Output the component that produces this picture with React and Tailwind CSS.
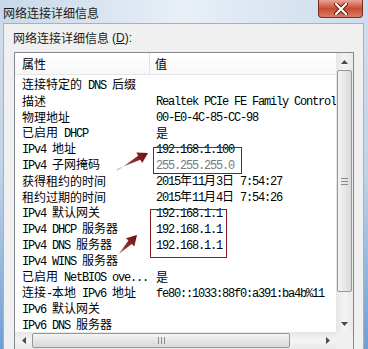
const CJK = "'Noto Sans CJK SC', 'Microsoft YaHei', sans-serif";
const MONO = "'Liberation Mono', 'Noto Sans CJK SC', monospace";

const rows = [
  ["连接特定的 DNS 后缀", ""],
  ["描述", "Realtek PCIe FE Family Controller"],
  ["物理地址", "00-E0-4C-85-CC-98"],
  ["已启用 DHCP", "是"],
  ["IPv4 地址", "192.168.1.100"],
  ["IPv4 子网掩码", "255.255.255.0", true],
  ["获得租约的时间", "2015年11月3日 7:54:27"],
  ["租约过期的时间", "2015年11月4日 7:54:26"],
  ["IPv4 默认网关", "192.168.1.1"],
  ["IPv4 DHCP 服务器", "192.168.1.1"],
  ["IPv4 DNS 服务器", "192.168.1.1"],
  ["IPv4 WINS 服务器", ""],
  ["已启用 NetBIOS ove...", "是"],
  ["连接-本地 IPv6 地址", "fe80::1033:88f0:a391:ba4b%11"],
  ["IPv6 默认网关", ""],
  ["IPv6 DNS 服务器", ""],
];

// split mixed text so CJK and latin runs get their own font
function Mixed({ text }) {
  const parts = text.split(/([\u3000-\u9fff\uff00-\uffef]+)/).filter(Boolean);
  return parts.map((p, i) =>
    /[\u3000-\u9fff\uff00-\uffef]/.test(p) ? (
      <span key={i} className="text-[12px] leading-[16px]" style={{ fontFamily: CJK }}>{p}</span>
    ) : (
      <span key={i} className="text-[12px] leading-[16px] tracking-[-1.2px] whitespace-pre" style={{ fontFamily: MONO }}>{p}</span>
    )
  );
}

function Tri({ dir }) {
  const pts = {
    up: "0,4 3.5,0 7,4",
    down: "0,0 3.5,4 7,0",
    left: "4,0 0,3.5 4,7",
    right: "0,0 4,3.5 0,7",
  }[dir];
  const w = dir === "up" || dir === "down" ? 7 : 4;
  const h = dir === "up" || dir === "down" ? 4 : 7;
  return (
    <svg width={w} height={h} viewBox={`0 0 ${w} ${h}`}>
      <polygon points={pts} fill="#4a4a4a" />
    </svg>
  );
}

export default function App() {
  return (
    <div className="relative w-[368px] h-[349px] overflow-hidden flex flex-col bg-gradient-to-b from-[#d3dfec] via-[#bfd2e7] to-[#6f9fd3]">
      {/* title bar */}
      <div className="h-[27px] flex items-start justify-between bg-gradient-to-r from-[#c9d8e9] via-[#e8eff7] to-[#cddcec]">
        <span className="pl-[3px] pt-[5px] text-[12px] text-[#1b1b1b] leading-[16px]" style={{ fontFamily: CJK }}>
          网络连接详细信息
        </span>
        <div className="mr-[5px] w-[45px] h-[18px] rounded-b-[4px] border border-t-0 border-[#7a2b22] bg-gradient-to-b from-[#e9a596] via-[#c84a33] to-[#dc7b63] flex items-center justify-center">
          <svg width="14" height="12" viewBox="0 0 14 12">
            <path d="M2 1 L12 11 M12 1 L2 11" stroke="#5a1a12" strokeWidth="4" strokeLinecap="round" />
            <path d="M2 1 L12 11 M12 1 L2 11" stroke="#ffffff" strokeWidth="2.2" strokeLinecap="round" />
          </svg>
        </div>
      </div>

      {/* dialog body */}
      <div className="ml-[3px] w-[361px] flex-1 bg-[#f0f0f0] border border-b-0 border-[#9fb2c8] flex flex-col">
        <div className="h-[28px] flex items-center pl-[9px] text-[#1b1b1b]">
          <span className="text-[12px]" style={{ fontFamily: CJK }}>网络连接详细信息</span>
          <span className="text-[12px] ml-[3px]" style={{ fontFamily: "'Liberation Sans', sans-serif" }}>
            (<span className="underline">D</span>):
          </span>
        </div>

        <div className="ml-[10px] w-[340px] flex-1 bg-white border border-b-0 border-[#828790] flex flex-col overflow-hidden">
          <div className="flex flex-1 overflow-hidden">
            {/* list content */}
            <div className="flex-1 overflow-hidden flex flex-col text-black">
              <div className="h-[22px] flex border-b border-[#e5e5e5] bg-gradient-to-b from-white to-[#f7f8fa]">
                <div className="w-[135px] pl-[7px] flex items-center border-r border-[#e3e3e3]">
                  <span className="text-[12px]" style={{ fontFamily: CJK }}>属性</span>
                </div>
                <div className="flex-1 pl-[5px] flex items-center">
                  <span className="text-[12px]" style={{ fontFamily: CJK }}>值</span>
                </div>
              </div>
              <div className="pt-[1px] flex flex-col">
                {rows.map(([k, v, gray], i) => (
                  <div key={i} className="h-[16px] flex items-center whitespace-nowrap">
                    <div className="w-[135px] shrink-0 pl-[7px] overflow-x-clip leading-[16px]">
                      <Mixed text={k} />
                    </div>
                    <div className={`flex-1 min-w-0 pl-[6px] overflow-x-clip leading-[16px] ${gray ? "text-[#7a7a7a]" : ""}`}>
                      <Mixed text={v} />
                    </div>
                  </div>
                ))}
              </div>
            </div>

            {/* vertical scrollbar */}
            <div className="w-[17px] flex flex-col bg-gradient-to-r from-[#e6e6e6] via-[#f4f4f4] to-[#e9e9e9]">
              <div className="h-[17px] flex items-center justify-center">
                <Tri dir="up" />
              </div>
              <div className="mx-[1px] h-[222px] rounded-[2px] border border-[#979797] bg-gradient-to-r from-[#f4f4f4] to-[#d9d9d9] flex items-center justify-center">
                <div className="flex flex-col gap-[2px]">
                  <div className="w-[7px] h-px bg-[#8a8a8a]" />
                  <div className="w-[7px] h-px bg-[#8a8a8a]" />
                  <div className="w-[7px] h-px bg-[#8a8a8a]" />
                </div>
              </div>
              <div className="flex-1" />
              <div className="h-[17px] flex items-center justify-center">
                <Tri dir="down" />
              </div>
            </div>
          </div>

          {/* horizontal scrollbar */}
          <div className="h-[17px] flex">
            <div className="flex-1 flex bg-gradient-to-b from-[#e6e6e6] via-[#f4f4f4] to-[#e9e9e9]">
              <div className="w-[17px] flex items-center justify-center">
                <Tri dir="left" />
              </div>
              <div className="my-[1px] w-[258px] rounded-[2px] border border-[#979797] bg-gradient-to-b from-[#f4f4f4] to-[#d9d9d9] flex items-center justify-center">
                <div className="flex gap-[2px]">
                  <div className="w-px h-[7px] bg-[#8a8a8a]" />
                  <div className="w-px h-[7px] bg-[#8a8a8a]" />
                  <div className="w-px h-[7px] bg-[#8a8a8a]" />
                </div>
              </div>
              <div className="flex-1" />
              <div className="w-[17px] flex items-center justify-center">
                <Tri dir="right" />
              </div>
            </div>
            <div className="w-[17px] bg-[#f0f0f0]" />
          </div>
        </div>
      </div>

      {/* annotations drawn over the screenshot */}
      <div className="absolute left-[153px] top-[147px] w-[89px] h-[27px] border border-[#8a1c1c]" />
      <div className="absolute left-[150px] top-[209px] w-[77px] h-[49px] border border-[#8a1c1c]" />
      <svg className="absolute left-0 top-0" width="368" height="349" viewBox="0 0 368 349">
        <defs>
          <linearGradient id="a1" gradientUnits="userSpaceOnUse" x1="117" y1="170" x2="148" y2="153">
            <stop offset="0" stopColor="#cfcfcf" />
            <stop offset="0.45" stopColor="#8f3535" />
            <stop offset="1" stopColor="#6e0a0a" />
          </linearGradient>
          <linearGradient id="a2" gradientUnits="userSpaceOnUse" x1="115" y1="258" x2="137" y2="235">
            <stop offset="0" stopColor="#cfcfcf" />
            <stop offset="0.45" stopColor="#8f3535" />
            <stop offset="1" stopColor="#6e0a0a" />
          </linearGradient>
        </defs>
        <polygon points="116.6,169.3 140.3,159.8 142.2,163.0 148,153 136.3,152.4 138.1,155.7 117.4,170.7" fill="url(#a1)" />
        <polygon points="114.5,257.5 131.7,244.0 134.3,246.5 137,235 126.0,238.3 128.4,240.6 115.5,258.5" fill="url(#a2)" />
      </svg>
    </div>
  );
}
